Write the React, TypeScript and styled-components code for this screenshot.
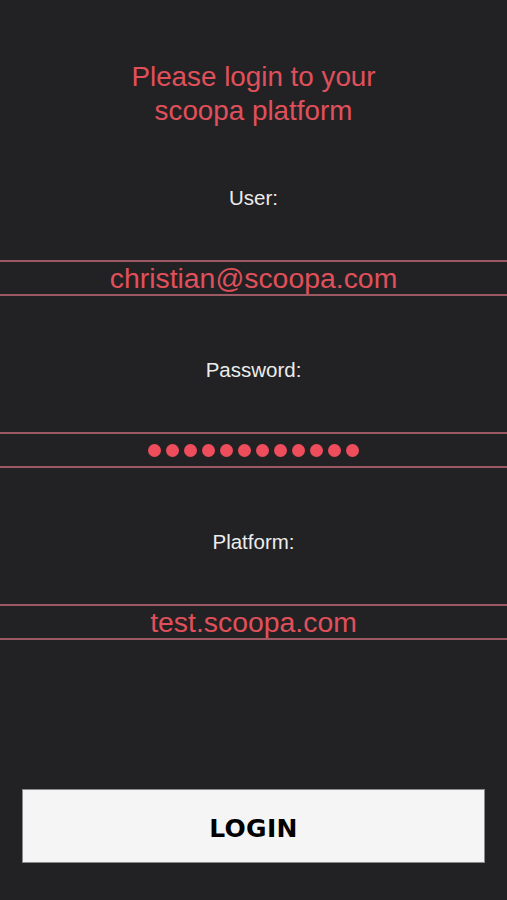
import React from "react";
import styled, { createGlobalStyle } from "styled-components";

const Global = createGlobalStyle`
  html, body { margin: 0; padding: 0; background: #222224; }
  body { font-family: "Liberation Sans", Arial, sans-serif; }
`;

const Page = styled.div`
  width: 507px;
  height: 900px;
  background: #222224;
  display: flex;
  flex-direction: column;
  padding-top: 60px;
  box-sizing: border-box;
`;

const Title = styled.h1`
  margin: 0 0 58px;
  font-weight: 400;
  font-size: 27.8px;
  line-height: 34px;
  color: #e0505b;
  text-align: center;
`;

const Field = styled.div`
  display: flex;
  flex-direction: column;
  margin-bottom: 62px;
`;

const Label = styled.div`
  font-size: 20.5px;
  line-height: 24px;
  color: #ececec;
  text-align: center;
  margin-bottom: 50px;
`;

const InputRow = styled.div`
  height: 32px;
  border-top: 2px solid #9c5a65;
  border-bottom: 2px solid #9c5a65;
  display: flex;
  align-items: center;
  justify-content: center;
  color: #e0505b;
  font-size: 28.4px;
  line-height: 34px;
`;

const Dots = styled.div`
  display: flex;
  gap: 5px;
`;

const Dot = styled.span`
  width: 13px;
  height: 13px;
  border-radius: 50%;
  background: #ee4d5c;
`;

const Spacer = styled.div`
  flex: 1;
`;

const LoginButton = styled.button`
  margin: 0 22px 37px;
  height: 74px;
  background: #f5f5f5;
  border: 1px solid #8a8a8a;
  font-family: "DejaVu Sans", Verdana, sans-serif;
  font-weight: 700;
  font-size: 25px;
  color: #000;
  letter-spacing: 0.3px;
  padding: 4px 0 0;
`;

export default function App() {
  return (
    <Page>
      <Global />
      <Title>
        Please login to your
        <br />
        scoopa platform
      </Title>
      <Field>
        <Label>User:</Label>
        <InputRow>christian@scoopa.com</InputRow>
      </Field>
      <Field>
        <Label>Password:</Label>
        <InputRow>
          <Dots>
            {Array.from({ length: 12 }).map((_, i) => (
              <Dot key={i} />
            ))}
          </Dots>
        </InputRow>
      </Field>
      <Field>
        <Label>Platform:</Label>
        <InputRow>test.scoopa.com</InputRow>
      </Field>
      <Spacer />
      <LoginButton>LOGIN</LoginButton>
    </Page>
  );
}
